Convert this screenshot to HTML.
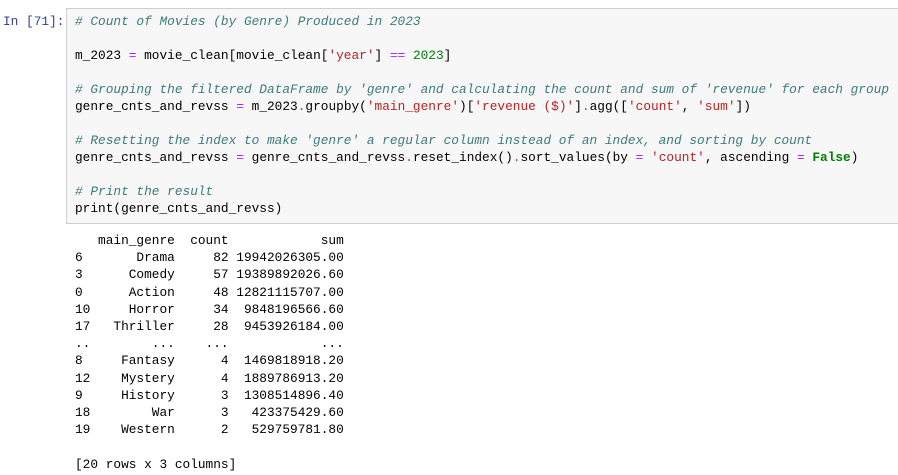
<!DOCTYPE html>
<html><head><style>
body{margin:0;background:#fff;width:898px;height:475px;overflow:hidden;position:relative;font-family:"Liberation Mono","DejaVu Sans Mono",monospace;font-size:12.8px;}
.prompt{position:absolute;left:3px;top:13px;color:#303f9f;line-height:17px;}
.cell{position:absolute;left:66px;top:8px;width:900px;height:214px;background:#f7f7f7;border:1px solid #cfcfcf;}
pre{margin:0;font:inherit;line-height:17px;white-space:pre;}
.code{position:absolute;left:75px;top:13px;color:#000;}
.out{position:absolute;left:75px;top:232px;color:#000;line-height:17.2px;}
.c{color:#3d7b7b;font-style:italic}.s{color:#ba2121}.n{color:#008000}.o{color:#aa22ff}.k{color:#008000;font-weight:bold}
</style></head><body>
<div class="prompt">In [71]:</div>
<div class="cell"></div>
<pre class="code"><span class="c"># Count of Movies (by Genre) Produced in 2023</span>

m_2023 <span class="o">=</span> movie_clean[movie_clean[<span class="s">'year'</span>] <span class="o">==</span> <span class="n">2023</span>]

<span class="c"># Grouping the filtered DataFrame by 'genre' and calculating the count and sum of 'revenue' for each group</span>
genre_cnts_and_revss <span class="o">=</span> m_2023<span class="o">.</span>groupby(<span class="s">'main_genre'</span>)[<span class="s">'revenue ($)'</span>]<span class="o">.</span>agg([<span class="s">'count'</span>, <span class="s">'sum'</span>])

<span class="c"># Resetting the index to make 'genre' a regular column instead of an index, and sorting by count</span>
genre_cnts_and_revss <span class="o">=</span> genre_cnts_and_revss<span class="o">.</span>reset_index()<span class="o">.</span>sort_values(by <span class="o">=</span> <span class="s">'count'</span>, ascending <span class="o">=</span> <span class="k">False</span>)

<span class="c"># Print the result</span>
print(genre_cnts_and_revss)</pre>
<pre class="out">   main_genre  count            sum
6       Drama     82 19942026305.00
3      Comedy     57 19389892026.60
0      Action     48 12821115707.00
10     Horror     34  9848196566.60
17   Thriller     28  9453926184.00
..        ...    ...            ...
8     Fantasy      4  1469818918.20
12    Mystery      4  1889786913.20
9     History      3  1308514896.40
18        War      3   423375429.60
19    Western      2   529759781.80

[20 rows x 3 columns]</pre>
</body></html>
